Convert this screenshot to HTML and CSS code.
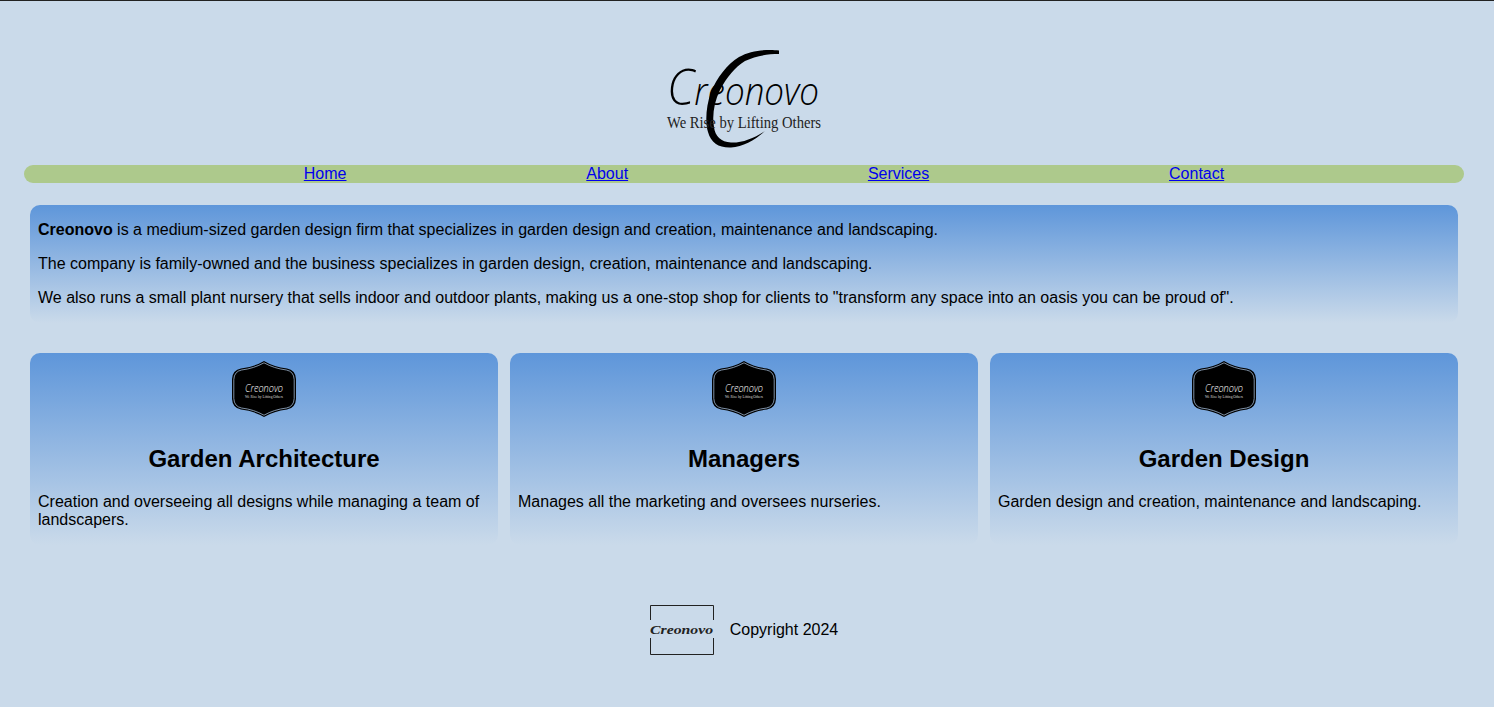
FILE: index.html
```html
<!DOCTYPE html>
<html lang="en">
<head>
    <meta charset="UTF-8">
    <meta name="viewport" content="width=device-width, initial-scale=1.0">
    <title>Creonovo</title>
    <link rel="stylesheet" href="styles.css">
</head>
<body>
    <div class="page">
        <header class="top">
            <svg class="logo" width="210" height="130" viewBox="0 0 210 130">
                <path d="M140 20.500C130 19 112 20 100 27C88 34 78 48 72 62C67 76 66 92 69 102C72 113 80 118 92 117.500C104 116.500 116 110 126 101C115 108 103 113 92 112.500C82 112 76 106 75 97C73 86 75 72 81 60C88 47 96 37 106 31C116 26 128 24 140 24Z" fill="#000"/>
                <text x="28" y="75" textLength="152" lengthAdjust="spacingAndGlyphs" class="logo-name"><tspan class="logo-cap">C</tspan>reonovo</text>
                <text x="28" y="98" textLength="154" lengthAdjust="spacingAndGlyphs" class="logo-tag">We Rise by Lifting Others</text>
            </svg>
        </header>

        <nav>
            <ul class="menu">
                <li><a href="#">Home</a></li>
                <li><a href="#">About</a></li>
                <li><a href="#">Services</a></li>
                <li><a href="#">Contact</a></li>
            </ul>
        </nav>

        <section class="intro fade">
            <p><b>Creonovo</b> is a medium-sized garden design firm that specializes in garden design and creation, maintenance and landscaping.</p>
            <p>The company is family-owned and the business specializes in garden design, creation, maintenance and landscaping.</p>
            <p>We also runs a small plant nursery that sells indoor and outdoor plants, making us a one-stop shop for clients to "transform any space into an oasis you can be proud of".</p>
        </section>

        <section class="cards">
            <div class="card fade">
                <svg class="badge" viewBox="0 0 64 56">
                    <path d="M32 0Q42 6 55 7.500Q63.500 9 64 18V38Q63.500 47 55 48.500Q42 50 32 56Q22 50 9 48.500Q.5 47 0 38V18Q.5 9 9 7.500Q22 6 32 0Z" fill="#000"/>
                    <path d="M32 1.800Q42 7.500 54.500 9Q61.800 10.500 62.200 18.500V37.500Q61.800 45.500 54.500 47Q42 48.500 32 54.200Q22 48.500 9.500 47Q2.200 45.500 1.800 37.500V18.500Q2.200 10.500 9.500 9Q22 7.500 32 1.800Z" fill="#000" stroke="#b5cfec" stroke-width=".7"/>
                    <text x="13" y="31" textLength="38" lengthAdjust="spacingAndGlyphs" class="badge-name">Creonovo</text>
                    <text x="13" y="37" textLength="38" lengthAdjust="spacingAndGlyphs" class="badge-tag">We Rise by Lifting Others</text>
                </svg>
                <h2>Garden Architecture</h2>
                <p>Creation and overseeing all designs while managing a team of landscapers.</p>
            </div>
            <div class="card fade">
                <svg class="badge" viewBox="0 0 64 56">
                    <path d="M32 0Q42 6 55 7.500Q63.500 9 64 18V38Q63.500 47 55 48.500Q42 50 32 56Q22 50 9 48.500Q.5 47 0 38V18Q.5 9 9 7.500Q22 6 32 0Z" fill="#000"/>
                    <path d="M32 1.800Q42 7.500 54.500 9Q61.800 10.500 62.200 18.500V37.500Q61.800 45.500 54.500 47Q42 48.500 32 54.200Q22 48.500 9.500 47Q2.200 45.500 1.800 37.500V18.500Q2.200 10.500 9.500 9Q22 7.500 32 1.800Z" fill="#000" stroke="#b5cfec" stroke-width=".7"/>
                    <text x="13" y="31" textLength="38" lengthAdjust="spacingAndGlyphs" class="badge-name">Creonovo</text>
                    <text x="13" y="37" textLength="38" lengthAdjust="spacingAndGlyphs" class="badge-tag">We Rise by Lifting Others</text>
                </svg>
                <h2>Managers</h2>
                <p>Manages all the marketing and oversees nurseries.</p>
            </div>
            <div class="card fade">
                <svg class="badge" viewBox="0 0 64 56">
                    <path d="M32 0Q42 6 55 7.500Q63.500 9 64 18V38Q63.500 47 55 48.500Q42 50 32 56Q22 50 9 48.500Q.5 47 0 38V18Q.5 9 9 7.500Q22 6 32 0Z" fill="#000"/>
                    <path d="M32 1.800Q42 7.500 54.500 9Q61.800 10.500 62.200 18.500V37.500Q61.800 45.500 54.500 47Q42 48.500 32 54.200Q22 48.500 9.500 47Q2.200 45.500 1.800 37.500V18.500Q2.200 10.500 9.500 9Q22 7.500 32 1.800Z" fill="#000" stroke="#b5cfec" stroke-width=".7"/>
                    <text x="13" y="31" textLength="38" lengthAdjust="spacingAndGlyphs" class="badge-name">Creonovo</text>
                    <text x="13" y="37" textLength="38" lengthAdjust="spacingAndGlyphs" class="badge-tag">We Rise by Lifting Others</text>
                </svg>
                <h2>Garden Design</h2>
                <p>Garden design and creation, maintenance and landscaping.</p>
            </div>
        </section>

        <footer class="bottom">
            <svg class="foot-logo" width="64" height="50" viewBox="0 0 64 50">
                <path d="M.5 15V.5H63.500V15M.5 33V49.500H63.500V33" fill="none" stroke="#222"/>
                <text x="0" y="29" textLength="63" lengthAdjust="spacingAndGlyphs" class="foot-name">Creonovo</text>
            </svg>
            <span>Copyright 2024</span>
        </footer>
    </div>
</body>
</html>
```

FILE: styles.css
```css
* {
    box-sizing: border-box;
}
html {
    background-color: #cadaea;
}
body {
    margin: 0;
    border-top: 1px solid #222;
    font-family: "Liberation Sans", Arial, sans-serif;
    font-size: 16px;
    color: #000;
}
.page {
    width: 1488px;
    padding: 0 24px;
}

/* logo */
.top {
    display: flex;
    justify-content: center;
    padding-top: 29px;
    height: 164px;
}
.logo {
    display: block;
}
.logo-name {
    font-family: "Open Sans", sans-serif;
    font-style: italic;
    font-weight: 300;
    font-size: 38px;
}
.logo-cap {
    font-size: 50px;
}
.logo-tag {
    font-family: "Liberation Serif", serif;
    font-size: 16px;
    fill: #222;
}

/* menu */
.menu {
    list-style: none;
    margin: 0;
    padding: 0 0 0 40px;
    display: flex;
    justify-content: space-evenly;
    background-color: #adc98c;
    border-radius: 10px;
}
.menu a {
    color: #0000ee;
}

.fade {
    background: linear-gradient(#5e96da, #cadaea);
    border-radius: 10px;
}
.intro {
    display: flow-root;
    margin: 22px 6px 30px;
    padding: 0 8px;
}
.intro p,
.card p {
    margin: 16px 0;
}

.cards {
    display: grid;
    grid-template-columns: repeat(3, 1fr);
    gap: 12px;
    padding: 0 6px;
}
.card {
    padding: 8px 8px 0;
    display: flow-root;
}
.badge {
    display: block;
    width: 64px;
    height: 56px;
    margin: 0 auto;
}
.badge-name {
    font-family: "Open Sans", sans-serif;
    font-style: italic;
    font-weight: 300;
    font-size: 11px;
    fill: #fff;
}
.badge-tag {
    font-family: "Liberation Serif", serif;
    font-size: 3px;
    fill: #ddd;
}
.card h2 {
    margin: 28px 0 20px;
    font-size: 24px;
    text-align: center;
}

.bottom {
    display: flex;
    justify-content: center;
    align-items: center;
    gap: 16px;
    margin-top: 60px;
}
.foot-logo {
    display: block;
}
.foot-name {
    font-family: "Liberation Serif", serif;
    font-style: italic;
    font-weight: bold;
    font-size: 13px;
    fill: #222;
}
```
